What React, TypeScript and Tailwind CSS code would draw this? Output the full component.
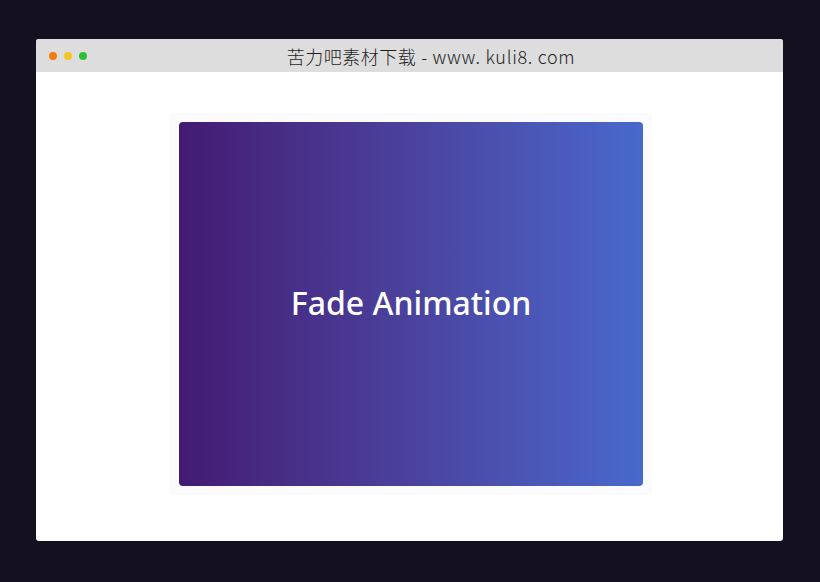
import React from "react";

export default function App() {
  return (
    <div className="w-[820px] h-[582px] bg-[#151020] pt-[39px] pl-[36px]">
      <div className="w-[747px] h-[502px] bg-white rounded-[3px] overflow-hidden flex flex-col">
        <div className="h-[33px] bg-[#dddddd] flex items-center relative shrink-0">
          <div className="flex items-center gap-[7px] pl-[13px]">
            <span className="w-[8px] h-[8px] rounded-full bg-[#f27b0d]" />
            <span className="w-[8px] h-[8px] rounded-full bg-[#f2c623]" />
            <span className="w-[8px] h-[8px] rounded-full bg-[#2cbf36]" />
          </div>
          <div className="absolute inset-0 flex items-center justify-center text-[18px] text-[#1f1f1f] font-light pl-[43px] pt-[1px]" style={{ fontFamily: '"Noto Sans CJK SC", sans-serif' }}>
            <span className="tracking-[0.5px]">苦力吧素材下载</span>
            <span className="tracking-[0.7px] ml-[5px] whitespace-pre">- www. kuli8. com</span>
          </div>
        </div>
        <div className="flex-1 flex items-center justify-center pl-[3px] pb-[5px]">
          <div className="p-[9px] bg-[#fbfbfd]">
            <div className="w-[464px] h-[364px] rounded-[4px] bg-gradient-to-r from-[#431a72] to-[#4869cc] flex items-center justify-center">
              <span className="text-white text-[32px] font-medium pb-[2px]" style={{ fontFamily: '"Noto Sans", sans-serif' }}>Fade Animation</span>
            </div>
          </div>
        </div>
      </div>
    </div>
  );
}
